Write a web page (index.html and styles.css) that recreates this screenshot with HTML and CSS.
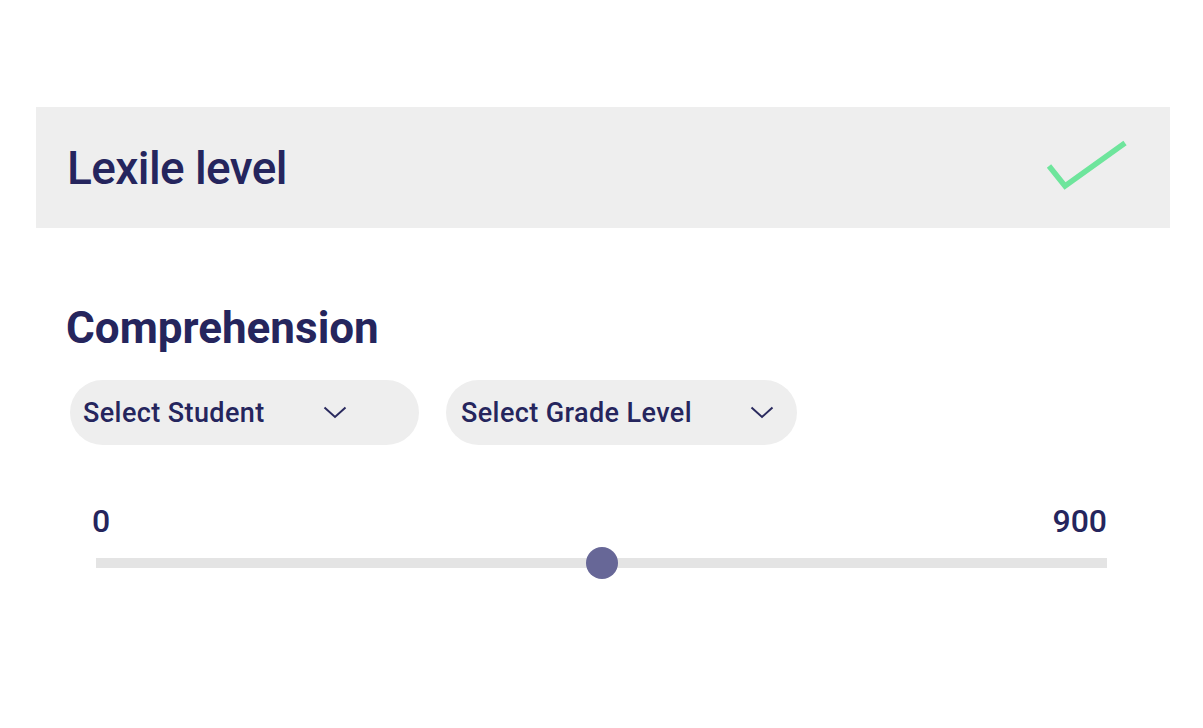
FILE: index.html
```html
<html>
<head>
    <link rel="stylesheet" href="styles.css">
</head>
<body>
    <div class="panel">
        <div class="panel-header">
            <h2>Lexile level</h2>
            <svg class="check" width="84" height="54" viewBox="0 0 84 54">
                <polyline points="3,26 19,46 79,3" fill="none" stroke="#6ee59c" stroke-width="5.5" stroke-linejoin="miter"/>
            </svg>
        </div>
        <div class="section">
            <h3>Comprehension</h3>
            <div class="filters">
                <div class="select-pill">
                    <span>Select Student</span>
                    <svg class="chevron" width="24" height="13" viewBox="0 0 24 13">
                        <polyline points="1.5,1.5 12,11 22.5,1.5" fill="none" stroke="#2a2a5e" stroke-width="2"/>
                    </svg>
                </div>
                <div class="select-pill">
                    <span>Select Grade Level</span>
                    <svg class="chevron" width="24" height="13" viewBox="0 0 24 13">
                        <polyline points="1.5,1.5 12,11 22.5,1.5" fill="none" stroke="#2a2a5e" stroke-width="2"/>
                    </svg>
                </div>
            </div>
            <div class="slider">
                <div class="slider-labels">
                    <span>0</span>
                    <span>900</span>
                </div>
                <div class="slider-track">
                    <div class="slider-thumb" style="left: 50%"></div>
                </div>
            </div>
        </div>
    </div>
</body>
</html>
```

FILE: styles.css
```css
body {
    font-family: Roboto, "Liberation Sans", sans-serif;
    background-color: #fff;
    color: #25255d;
    margin: 0;
    padding: 0;
}
.panel {
    margin: 107px 33px 0 36px;
}
.panel-header {
    height: 121px;
    background-color: #eeeeee;
    display: flex;
    align-items: center;
    justify-content: space-between;
    padding: 0 40px 0 31px;
}
.panel-header h2 {
    margin: 0;
    font-size: 46px;
    font-weight: 500;
    letter-spacing: -0.6px;
}
.check {
    margin-top: -2px;
}
.section {
    padding: 0 0 0 30px;
}
.section h3 {
    margin: 75px 0 27px 0;
    font-size: 44px;
    font-weight: 700;
    line-height: 50px;
}
.filters {
    display: flex;
    gap: 27px;
    margin-left: 4px;
}
.select-pill {
    width: 349px;
    height: 65px;
    box-sizing: border-box;
    background-color: #eeeeee;
    border-radius: 33px;
    display: flex;
    align-items: center;
    padding-left: 13px;
    gap: 58px;
    font-size: 27px;
    font-weight: 500;
    letter-spacing: 0.4px;
}
.select-pill:last-child {
    width: 351px;
    padding-left: 15px;
}
.slider {
    margin: 57px 63px 0 26px;
}
.slider-labels {
    display: flex;
    justify-content: space-between;
    font-size: 32px;
    font-weight: 500;
    line-height: 38px;
}
.slider-track {
    position: relative;
    height: 10px;
    margin: 18px 0 0 4px;
    background-color: #e4e4e4;
}
.slider-thumb {
    position: absolute;
    top: -11px;
    width: 32px;
    height: 32px;
    margin-left: -16px;
    border-radius: 50%;
    background-color: #676797;
}
```
